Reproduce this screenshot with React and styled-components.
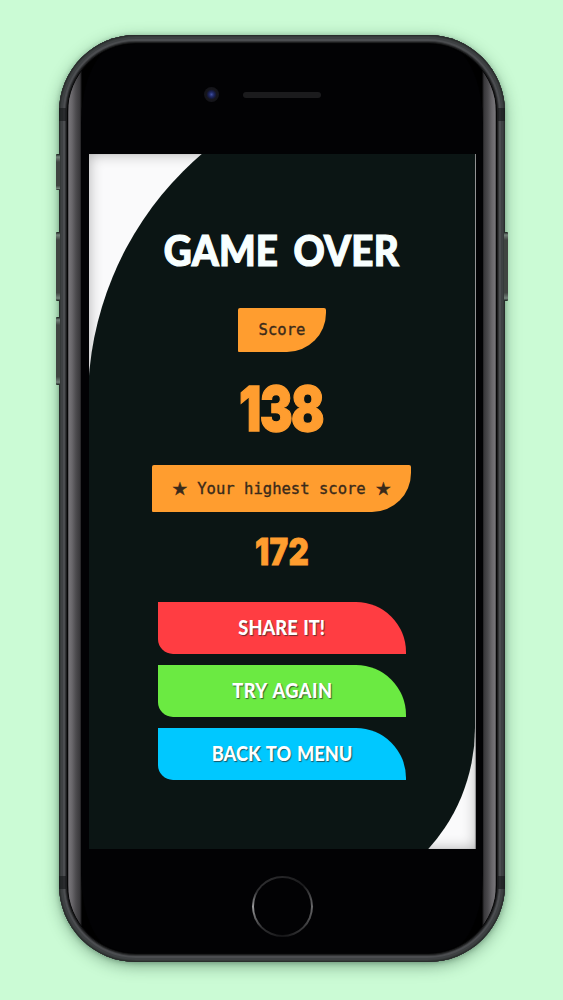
import React from 'react';
import styled, { createGlobalStyle } from 'styled-components';

const GlobalStyle = createGlobalStyle`
    * {
        box-sizing: border-box;
    }
    body {
        margin: 0;
        background: #cbfbd5;
    }
`

const Page = styled.main`
    display: flex;
    justify-content: center;
    width: 563px;
    height: 1000px;
    padding: 34.5px 0 0 1px;
    overflow: hidden;
    background: #cbfbd5;
`

const Phone = styled.div`
    position: relative;
    width: 446px;
    height: 927px;
    padding: 8px;
    border-radius: 77px;
    background: #1c1d1e;
    box-shadow:
        inset 0 0 0 1px #292d2c,
        inset 0 0 0 2px #363a3a,
        inset 0 0 0 4px #3e4143,
        inset 0 0 0 6px #4b4d50,
        inset 0 0 0 7px #343537,
        0 4px 16px rgba(20, 60, 35, .4),
        0 1px 5px rgba(20, 50, 35, .3);
`

const Glass = styled.div`
    width: 430px;
    height: 911px;
    padding: 0 13px;
    border: 1px solid #050506;
    border-radius: 69px;
    overflow: hidden;
    background: linear-gradient(to right, #4a494b 0, #747276 1.5px, #69676b 4px, #4c4b4e 8px, #38373a 12px, #000 14px, #000 414px, #38373a 416px, #4c4b4e 420px, #69676b 424px, #747276 426.5px, #4a494b 428px);
`

const Face = styled.div`
    position: relative;
    display: flex;
    flex-direction: column;
    align-items: center;
    height: 909px;
    padding-top: 110.5px;
    border-radius: 40px / 80px;
    background: #020204;
`

const Band = styled.span`
    position: absolute;
    top: ${props => props.$top}px;
    ${props => props.$side}: 0;
    width: 7px;
    height: 13px;
    background: rgba(20, 22, 23, .6);
`

const SideButton = styled.span`
    position: absolute;
    top: ${props => props.$top}px;
    ${props => props.$side}: -3px;
    width: 4px;
    height: ${props => props.$height}px;
    border-radius: 1px;
    background: linear-gradient(to bottom, #18201b 0, #74827a 3px, #404441 8px, #404441 88%, #74827a 96%, #18201b 100%);
`

const Camera = styled.span`
    position: absolute;
    top: 43.5px;
    left: 123px;
    width: 15px;
    height: 15px;
    border-radius: 50%;
    background: radial-gradient(circle, #4050a0 0, #202a68 20%, #15183a 38%, #16161c 48%, #111116 100%);
`

const Speaker = styled.span`
    position: absolute;
    top: 48px;
    left: 162px;
    width: 78px;
    height: 6px;
    border-radius: 3px;
    background: #1b1b1d;
`

const Screen = styled.section`
    position: relative;
    z-index: 0;
    display: flex;
    flex-direction: column;
    align-items: center;
    flex: none;
    width: 387px;
    height: 695px;
    margin-left: 1px;
    overflow: hidden;
    background: #fafafb;
`

// soft inner edge that only the white corners show
const Shade = styled.div`
    position: absolute;
    z-index: -2;
    inset: 0;
    box-shadow: inset 0 0 14px rgba(0, 0, 0, .3), inset -1px 0 1px rgba(0, 0, 0, .35);
`

const Blob = styled.div`
    position: absolute;
    z-index: -1;
    inset: -78px 1.2px -59px -.8px;
    border-radius: 325px 0 180px 0;
    background: #0b1514;
`

const Title = styled.h1`
    margin: 70px 0 0;
    height: 53px;
    color: #f8ffff;
    font: 900 41.5px/53px Lato, sans-serif;
    letter-spacing: .2px;
    word-spacing: 6.5px;
    white-space: nowrap;
    transform: translateX(-1px) scaleX(.93);
    -webkit-text-stroke: 1.2px #f8ffff;
`

const Label = styled.div`
    display: flex;
    justify-content: center;
    align-items: center;
    gap: 9.4px;
    width: ${props => props.$wide ? 259 : 88.5}px;
    height: ${props => props.$wide ? 47.5 : 44.5}px;
    margin: ${props => props.$wide ? '26px 2px 0 0' : '30.7px 1px 0 0'};
    padding-top: 1px;
    border-radius: 2px 2px 39px 1px;
    background: #ff9d2f;
    color: #3a2a1a;
    font: 15.55px/20px "DejaVu Sans Mono", monospace;
    white-space: nowrap;
    -webkit-text-stroke: .35px #3a2a1a;
`

const Star = styled.span`
    width: 16px;
    text-align: center;
    font: 18px/20px "DejaVu Sans", sans-serif;
`

const Points = styled.div`
    height: ${props => props.$small ? 38 : 60}px;
    margin: ${props => props.$small ? 21 : 26.5}px 1px 0 0;
    color: #ff9d2f;
    font: 900 ${props => props.$small ? 36.5 : 62.5}px/${props => props.$small ? 38 : 58}px Inter, sans-serif;
    letter-spacing: ${props => props.$small ? '.01em' : '-.035em'};
    transform: translateX(${props => props.$small ? -.5 : -1}px) scaleX(${props => props.$small ? .86 : .79});
    -webkit-text-stroke: ${props => props.$small ? .8 : 1.4}px #ff9d2f;
`

const Actions = styled.div`
    display: flex;
    flex-direction: column;
    gap: 10.5px;
    margin: 31px 1px 0 0;
`

const Button = styled.button`
    width: 248px;
    height: 52.2px;
    padding: 0 0 2px;
    border: none;
    border-radius: 0 50px 0 15px;
    background: ${props => props.$color};
    color: #fff;
    font: 900 20.5px/24px Lato, sans-serif;
    letter-spacing: ${props => props.$spacing}px;
    word-spacing: 1.5px;
    text-shadow: 1px 1px 1px rgba(30, 40, 40, .7);
    span {
        display: inline-block;
        transform: scaleX(.89);
    }
`

const HomeButton = styled.div`
    width: 61px;
    height: 61px;
    margin-top: 26.5px;
    padding: 2px;
    border-radius: 50%;
    background: conic-gradient(#252527, #1b1b1d 45deg, #68686a 90deg, #404042 125deg, #151517 180deg, #303032 225deg, #9a9a9c 270deg, #303032 300deg, #252527);
    &::after {
        content: '';
        display: block;
        height: 57px;
        border-radius: 50%;
        background: #020204;
    }
`

const actions = [
    { text: 'SHARE IT!', color: '#ff3d42', spacing: 0 },
    { text: 'TRY AGAIN', color: '#6bea42', spacing: .5 },
    { text: 'BACK TO MENU', color: '#00c8ff', spacing: 0 }
];

const GameOver = ({ score, best }) => (
    <Screen>
        <Shade />
        <Blob />
        <Title>GAME OVER</Title>
        <Label>Score</Label>
        <Points>{score}</Points>
        <Label $wide>
            <Star>★</Star>
            <span>Your highest score</span>
            <Star>★</Star>
        </Label>
        <Points $small>{best}</Points>
        <Actions>
            {actions.map(action => (
                <Button key={action.text} $color={action.color} $spacing={action.spacing}>
                    <span>{action.text}</span>
                </Button>
            ))}
        </Actions>
    </Screen>
);

const App = () => (
    <Page>
        <GlobalStyle />
        <Phone>
            <SideButton $side='left' $top={119} $height={36} />
            <SideButton $side='left' $top={197.5} $height={69} />
            <SideButton $side='left' $top={282.5} $height={68} />
            <SideButton $side='right' $top={197.5} $height={69} />
            <Band $side='left' $top={73} />
            <Band $side='right' $top={73} />
            <Band $side='left' $top={841} />
            <Band $side='right' $top={841} />
            <Glass>
                <Face>
                    <Camera />
                    <Speaker />
                    <GameOver score={138} best={172} />
                    <HomeButton />
                </Face>
            </Glass>
        </Phone>
    </Page>
);

export default App;
